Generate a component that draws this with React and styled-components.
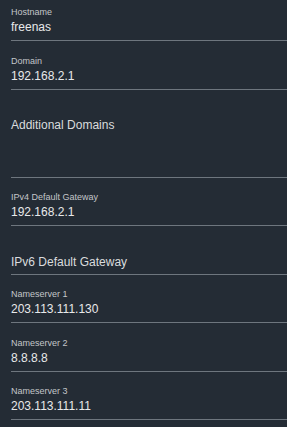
import React from 'react'
import styled, { createGlobalStyle } from 'styled-components'

const GlobalStyle = createGlobalStyle`
  html, body {
    margin: 0;
    padding: 0;
    background: #242c35;
  }
  body {
    font-family: "Liberation Sans", Arial, sans-serif;
  }
`

const Form = styled.div`
  display: flex;
  flex-direction: column;
  gap: 14.5px;
  width: 287px;
  min-height: 427px;
  box-sizing: border-box;
  padding: 7px 0 0 11px;
  background: #242c35;
`

const Field = styled.div`
  display: flex;
  flex-direction: column;
  padding-bottom: 6px;
  border-bottom: 1px solid #6e767e;
`

const Label = styled.label`
  font-size: 9px;
  line-height: 11px;
  color: #c3c6c9;
`

const Value = styled.div`
  margin-top: 2px;
  font-size: 12px;
  line-height: 14px;
  color: #e8e9ea;
`

const Section = styled.div`
  display: flex;
  flex-direction: column;
  padding: 14px 0 5px;
  border-bottom: 1px solid #6e767e;
`

const Heading = styled.div`
  font-size: 12px;
  line-height: 14px;
  color: #dadcde;
`

const SectionBody = styled.div`
  height: ${p => p.$height || 0}px;
`

const fields = [
  { type: 'field', label: 'Hostname', value: 'freenas' },
  { type: 'field', label: 'Domain', value: '192.168.2.1' },
  { type: 'section', label: 'Additional Domains', height: 39.5 },
  { type: 'field', label: 'IPv4 Default Gateway', value: '192.168.2.1' },
  { type: 'section', label: 'IPv6 Default Gateway', height: 0 },
  { type: 'field', label: 'Nameserver 1', value: '203.113.111.130' },
  { type: 'field', label: 'Nameserver 2', value: '8.8.8.8' },
  { type: 'field', label: 'Nameserver 3', value: '203.113.111.11' },
]

const App = () => {
  return (
    <>
      <GlobalStyle />
      <Form>
        {fields.map(f =>
          f.type === 'section' ? (
            <Section key={f.label}>
              <Heading>{f.label}</Heading>
              <SectionBody $height={f.height} />
            </Section>
          ) : (
            <Field key={f.label}>
              <Label>{f.label}</Label>
              <Value>{f.value}</Value>
            </Field>
          )
        )}
      </Form>
    </>
  )
}

export default App
